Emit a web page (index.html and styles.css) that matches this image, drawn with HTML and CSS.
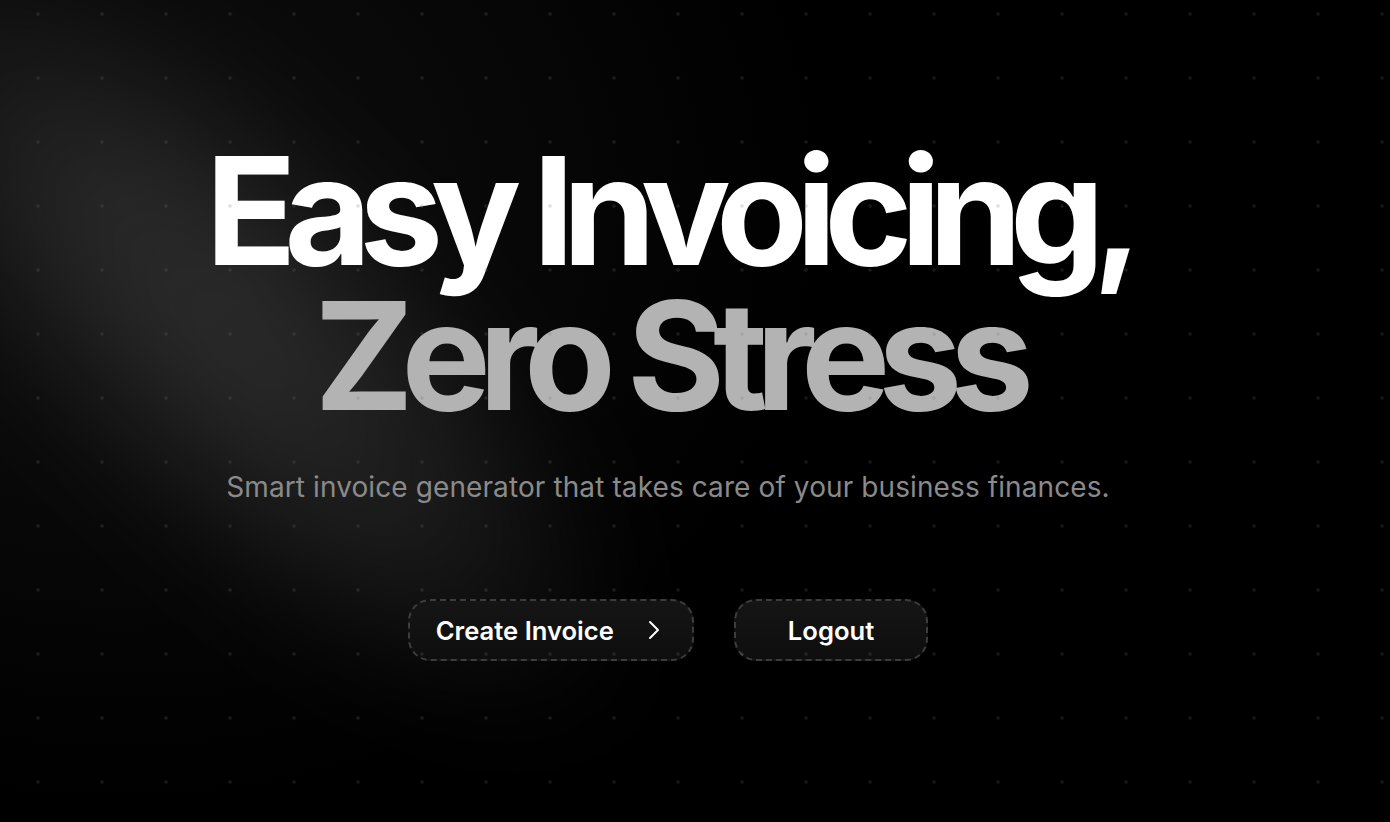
FILE: index.html
```html
<!DOCTYPE html>
<html lang="en">
<head>
<meta charset="utf-8">
<title>Easy Invoicing</title>
<link rel="stylesheet" href="styles.css">
</head>
<body>
<div class="page">
  <div class="spotlight"></div>
  <main class="hero">
    <h1 class="title">
      <span class="line line-1">Easy Invoicing,</span>
      <span class="line line-2">Zero Stress</span>
    </h1>
    <p class="subtitle">Smart invoice generator that takes care of your business finances.</p>
    <div class="actions">
      <a class="btn" href="#">Create Invoice
        <svg class="chev" width="12" height="20" viewBox="0 0 12 20" fill="none"><path d="M2 2 L10 10 L2 18" stroke="#fff" stroke-width="2" stroke-linecap="round" stroke-linejoin="round"/></svg>
      </a>
      <a class="btn btn-logout" href="#">Logout</a>
    </div>
  </main>
  <div class="dots"></div>
</div>
</body>
</html>
```

FILE: styles.css
```css
* { box-sizing: border-box; }
html, body {
  margin: 0;
  padding: 0;
  background: #000;
  height: 100%;
  overflow: hidden;
}
body {
  font-family: "Inter", "Noto Sans", sans-serif;
  color: #fff;
}
.page {
  position: relative;
  width: 100%;
  height: 822px;
  overflow: hidden;
  background: radial-gradient(ellipse 700px 600px at 120px 200px, #0f0f0f 0%, #080808 50%, #000 100%);
}
.spotlight {
  position: absolute;
  left: -280px;
  top: 150px;
  width: 1040px;
  height: 380px;
  border-radius: 50%;
  background: radial-gradient(ellipse at center, rgba(255,255,255,0.14) 0%, rgba(255,255,255,0.08) 40%, rgba(255,255,255,0) 72%);
  transform: rotate(45deg);
  filter: blur(50px);
  pointer-events: none;
}
.dots {
  position: absolute;
  inset: 0;
  background-image: radial-gradient(circle, rgba(110,110,110,0.22) 1.4px, transparent 2px);
  background-size: 64px 64px;
  background-position: 6px -18px;
  pointer-events: none;
}
.hero {
  position: relative;
  display: flex;
  flex-direction: column;
  align-items: center;
  padding-top: 138px;
  padding-right: 54px;
}
.title {
  margin: 0;
  display: flex;
  flex-direction: column;
  align-items: center;
  font-size: 150px;
  line-height: 145px;
  font-weight: 700;
  letter-spacing: -12.2px;
}
.line-1 { color: #fff; }
.line-2 { color: #b3b3b3; }
.subtitle {
  margin: 41px 0 0;
  font-size: 28px;
  line-height: 36px;
  letter-spacing: 0.1px;
  color: #8a8a8a;
  font-weight: 400;
}
.actions {
  margin-top: 94px;
  display: flex;
  gap: 40px;
}
.btn {
  display: flex;
  align-items: center;
  gap: 34px;
  height: 62px;
  padding: 0 32px 0 26px;
  border: 2px dashed #3d3d3d;
  border-radius: 22px;
  background: linear-gradient(180deg, #151515, #0e0e0e);
  color: #fff;
  text-decoration: none;
  font-size: 25.6px;
  font-weight: 600;
}
.btn-logout {
  padding: 0 52px;
}
.chev { display: block; }
```
